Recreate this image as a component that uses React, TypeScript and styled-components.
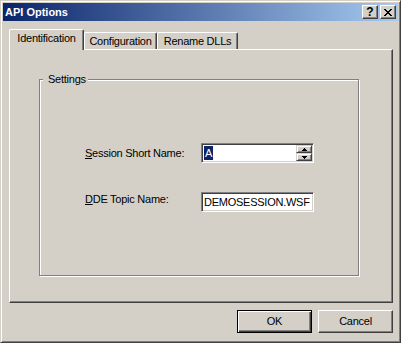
import React from "react";
import styled, { createGlobalStyle } from "styled-components";

const Global = createGlobalStyle`
  html, body { margin: 0; padding: 0; background: #d4d0c8; }
  body { font-family: "Liberation Sans", Arial, sans-serif; font-size: 11px; color: #000; letter-spacing: -0.25px; }
  #root { width: 401px; height: 343px; }
`;

const Window = styled.div`
  box-sizing: border-box;
  width: 401px;
  height: 343px;
  background: #d4d0c8;
  border-style: solid;
  border-width: 1px;
  border-color: #d4d0c8 #404040 #404040 #d4d0c8;
  box-shadow: inset 1px 1px 0 #fff, inset -1px -1px 0 #808080;
  padding: 2px;
  display: flex;
  flex-direction: column;
`;

const TitleBar = styled.div`
  height: 18px;
  flex: none;
  background: linear-gradient(to right, #0a246a, #a6caf0);
  display: flex;
  align-items: center;
  justify-content: space-between;
  padding: 0 2px 0 2px;
`;

const Title = styled.span`
  color: #fff;
  font-weight: bold;
  font-size: 11px;
  line-height: 13px;
  letter-spacing: 0;
`;

const Controls = styled.div`
  display: flex;
  gap: 2px;
`;

const CaptionButton = styled.div`
  box-sizing: border-box;
  width: 16px;
  height: 14px;
  background: #d4d0c8;
  border: 1px solid;
  border-color: #fff #404040 #404040 #fff;
  box-shadow: inset -1px -1px 0 #808080;
  display: flex;
  align-items: center;
  justify-content: center;
  font-weight: bold;
  font-size: 12px;
  line-height: 11px;
  letter-spacing: 0;
`;

const Body = styled.div`
  flex: 1;
  display: flex;
  flex-direction: column;
  padding: 8px 5px 0 6px;
`;

const TabStrip = styled.div`
  display: flex;
  align-items: flex-end;
  height: 20px;
  position: relative;
  z-index: 1;
`;

const Tab = styled.div<{ $active?: boolean; $w: number }>`
  box-sizing: border-box;
  width: ${(p) => p.$w}px;
  height: ${(p) => (p.$active ? 21 : 17)}px;
  margin-bottom: ${(p) => (p.$active ? -1 : 0)}px;
  background: #d4d0c8;
  border-left: 1px solid #fff;
  border-top: 1px solid #fff;
  border-right: 1px solid #404040;
  box-shadow: inset -1px 0 0 #808080;
  border-top-left-radius: 2px;
  border-top-right-radius: 2px;
  display: flex;
  align-items: center;
  justify-content: center;
  padding-bottom: ${(p) => (p.$active ? 3 : 0)}px;
  line-height: 13px;
`;

const Panel = styled.div`
  box-sizing: border-box;
  height: 254px;
  border-style: solid;
  border-width: 1px;
  border-color: #fff #404040 #404040 #fff;
  box-shadow: inset -1px -1px 0 #808080;
  padding: 29px 0 0 29px;
`;

const Group = styled.div`
  position: relative;
  box-sizing: border-box;
  width: 320px;
  height: 197px;
  border: 1px solid #808080;
  box-shadow: inset 1px 1px 0 #fff, 1px 1px 0 #fff;
  padding: 63px 0 0 45px;
  display: flex;
  flex-direction: column;
  gap: 29px;
`;

const Legend = styled.span`
  position: absolute;
  top: -8px;
  left: 3px;
  background: #d4d0c8;
  padding: 0 2px 0 5px;
  line-height: 14px;
`;

const Row = styled.div`
  display: flex;
  align-items: center;
  height: 20px;
`;

const Label = styled.label<{ $lift?: number }>`
  width: 116px;
  line-height: 13px;
  margin-bottom: ${(p) => (p.$lift ?? 0) * 2}px;
`;

const Edit = styled.div`
  box-sizing: border-box;
  width: 113px;
  height: 20px;
  background: #fff;
  border: 1px solid;
  border-color: #808080 #fff #fff #808080;
  box-shadow: inset 1px 1px 0 #404040, inset -1px -1px 0 #d4d0c8;
  padding: 1px 1px 1px 2px;
  display: flex;
  align-items: center;
  overflow: hidden;
`;

const EditText = styled.span`
  flex: 1;
  white-space: nowrap;
  line-height: 14px;
  overflow: hidden;
`;

const Selected = styled.span`
  background: #0a246a;
  color: #fff;
  padding: 0 1px;
  line-height: 14px;
  display: inline-block;
`;

const Spin = styled.div`
  display: flex;
  flex-direction: column;
  width: 16px;
  height: 16px;
  align-self: stretch;
`;

const SpinButton = styled.div`
  box-sizing: border-box;
  height: 8px;
  background: #d4d0c8;
  border: 1px solid;
  border-color: #d4d0c8 #404040 #404040 #d4d0c8;
  box-shadow: inset 1px 1px 0 #fff, inset -1px -1px 0 #808080;
  display: flex;
  align-items: center;
  justify-content: center;
`;

const ButtonRow = styled.div`
  display: flex;
  justify-content: flex-end;
  gap: 6px;
  margin-top: 7px;
`;

const Button = styled.div<{ $default?: boolean }>`
  box-sizing: border-box;
  width: 75px;
  height: 23px;
  background: #d4d0c8;
  border: 1px solid;
  border-color: ${(p) => (p.$default ? "#000" : "#fff #404040 #404040 #fff")};
  box-shadow: ${(p) =>
    p.$default
      ? "inset 1px 1px 0 #fff, inset -1px -1px 0 #404040, inset -2px -2px 0 #808080"
      : "inset -1px -1px 0 #808080"};
  display: flex;
  align-items: center;
  justify-content: center;
  line-height: 13px;
`;

const CloseGlyph = () => {
  const rows = ["11000011", "01100110", "00111100", "00011000", "00111100", "01100110", "11000011"];
  return (
    <svg width="8" height="7" viewBox="0 0 8 7" shapeRendering="crispEdges">
      {rows.flatMap((r, y) =>
        r.split("").map((c, x) => (c === "1" ? <rect key={`${x}-${y}`} x={x} y={y} width="1" height="1" fill="#000" /> : null))
      )}
    </svg>
  );
};

const Arrow = ({ up }: { up?: boolean }) => (
  <svg width="5" height="3" viewBox="0 0 5 3" shapeRendering="crispEdges">
    {up ? (
      <>
        <rect x="2" y="0" width="1" height="1" fill="#000" />
        <rect x="1" y="1" width="3" height="1" fill="#000" />
        <rect x="0" y="2" width="5" height="1" fill="#000" />
      </>
    ) : (
      <>
        <rect x="0" y="0" width="5" height="1" fill="#000" />
        <rect x="1" y="1" width="3" height="1" fill="#000" />
        <rect x="2" y="2" width="1" height="1" fill="#000" />
      </>
    )}
  </svg>
);

export default function App() {
  return (
    <>
      <Global />
      <Window>
        <TitleBar>
          <Title>API Options</Title>
          <Controls>
            <CaptionButton>?</CaptionButton>
            <CaptionButton>
              <CloseGlyph />
            </CaptionButton>
          </Controls>
        </TitleBar>
        <Body>
          <TabStrip>
            <Tab $active $w={75}>Identification</Tab>
            <Tab $w={73}>Configuration</Tab>
            <Tab $w={81}>Rename DLLs</Tab>
          </TabStrip>
          <Panel>
            <Group>
              <Legend>Settings</Legend>
              <Row>
                <Label>
                  <u>S</u>ession Short Name:
                </Label>
                <Edit>
                  <EditText>
                    <Selected>A</Selected>
                  </EditText>
                  <Spin>
                    <SpinButton>
                      <Arrow up />
                    </SpinButton>
                    <SpinButton>
                      <Arrow />
                    </SpinButton>
                  </Spin>
                </Edit>
              </Row>
              <Row>
                <Label $lift={3}>
                  <u>D</u>DE Topic Name:
                </Label>
                <Edit>
                  <EditText>DEMOSESSION.WSF</EditText>
                </Edit>
              </Row>
            </Group>
          </Panel>
          <ButtonRow>
            <Button $default>OK</Button>
            <Button>Cancel</Button>
          </ButtonRow>
        </Body>
      </Window>
    </>
  );
}
